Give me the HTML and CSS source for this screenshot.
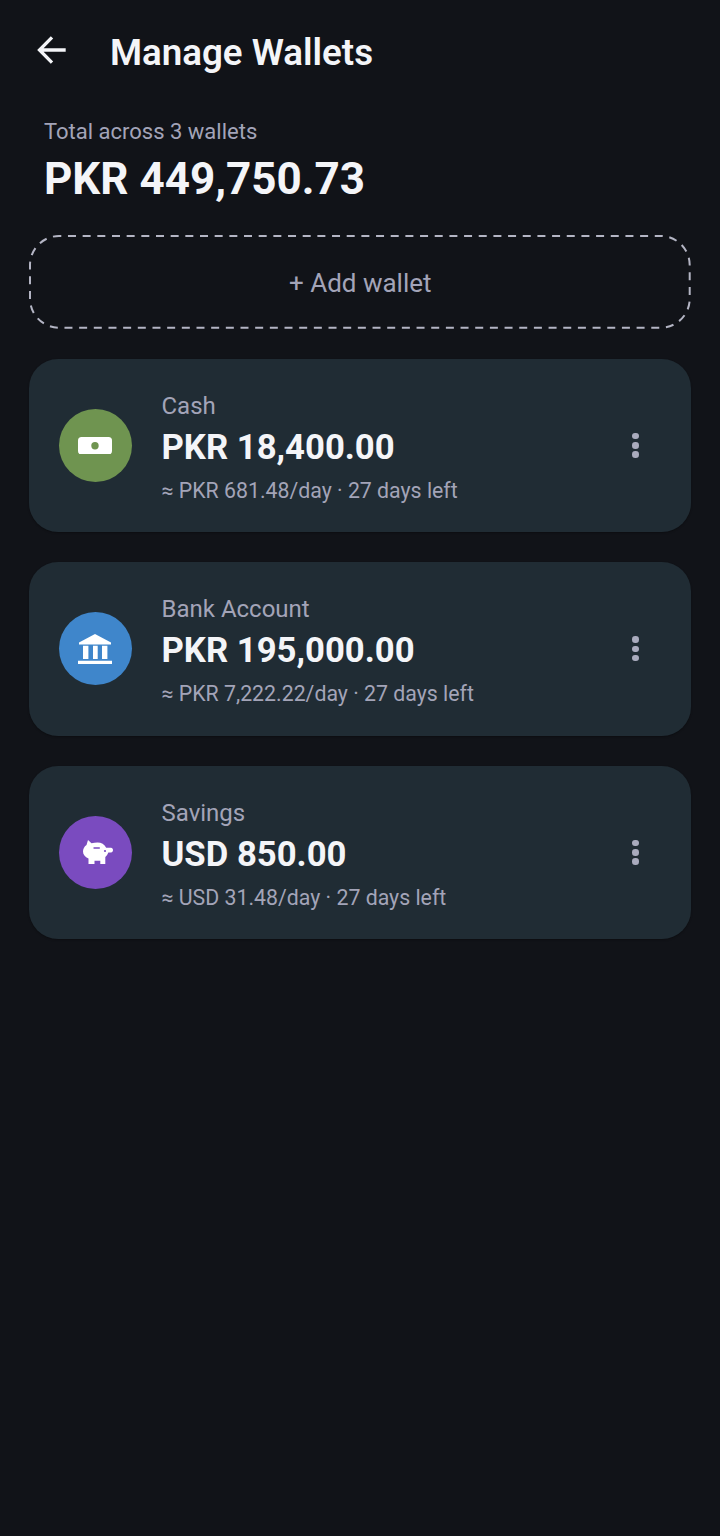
FILE: index.html
```html
<!DOCTYPE html>
<html lang="en">
<head>
<meta charset="utf-8">
<title>Manage Wallets</title>
<link rel="stylesheet" href="styles.css">
</head>
<body>
<main class="screen">
  <header class="topbar">
    <svg class="back" viewBox="0 0 32 30" aria-hidden="true"><path d="M29.700 15H3.500M16 2.300 3.500 15 16 27.700"/></svg>
    <h1 class="title">Manage Wallets</h1>
  </header>
  <section class="total">
    <div class="total-label">Total across 3 wallets</div>
    <div class="total-value">PKR 449,750.73</div>
  </section>
  <div class="add">
    <svg class="add-border" viewBox="0 0 661.500 94" aria-hidden="true"><rect x="1" y="1" width="659.700" height="91.700" rx="29" ry="29"/></svg>
    <span class="add-text">+ Add wallet</span>
  </div>
  <section class="list">
    <article class="card">
      <div class="avatar green">
        <svg class="icon" viewBox="0 0 34 17.500" aria-hidden="true"><rect x="0" y="0" width="34" height="17.500" rx="3.500" fill="#fff"/><circle cx="17" cy="8.750" r="3.700" fill="#6f9450"/></svg>
      </div>
      <div class="info">
        <div class="name">Cash</div>
        <div class="amount">PKR 18,400.00</div>
        <div class="rate">≈ PKR 681.48/day · 27 days left</div>
      </div>
      <div class="more"><i></i><i></i><i></i></div>
    </article>
    <article class="card">
      <div class="avatar blue">
        <svg class="icon bank" viewBox="0 0 34 30" aria-hidden="true"><path fill="#fff" d="M17 0 33 8.500V10.500H1V8.500ZM5 11.700h5.400V25H5ZM15 11.700h4.700V25H15ZM24 11.700h5.400V25H24ZM0 26.700h34V30H0Z"/></svg>
      </div>
      <div class="info">
        <div class="name">Bank Account</div>
        <div class="amount">PKR 195,000.00</div>
        <div class="rate">≈ PKR 7,222.22/day · 27 days left</div>
      </div>
      <div class="more"><i></i><i></i><i></i></div>
    </article>
    <article class="card">
      <div class="avatar purple">
        <svg class="icon pig" viewBox="0 0 30 24" aria-hidden="true"><path fill="#fff" d="M5 0l3.500 3.200C10.500 2.700 12.500 2.500 14.500 2.500c3.800 0 7 1.800 8.700 5.300H28c1.200 0 2 1 2 2.300s-.8 2.400-2 2.400h-2.700c-.6 1.800-1.600 3.300-3 4.500V24h-5v-3.200h-5.800V24H5.500v-5.500C2 17 0 14.500 0 11.500 0 9 1.200 6.500 3.500 5Z"/><rect x="10.300" y="7.200" width="6.700" height="1.500" rx=".7" fill="#7a4bbf"/><circle cx="22" cy="11" r="1.100" fill="#7a4bbf"/></svg>
      </div>
      <div class="info">
        <div class="name">Savings</div>
        <div class="amount">USD 850.00</div>
        <div class="rate">≈ USD 31.48/day · 27 days left</div>
      </div>
      <div class="more"><i></i><i></i><i></i></div>
    </article>
  </section>
</main>
</body>
</html>
```
FILE: styles.css
```css
* { box-sizing: border-box; }
html, body { margin: 0; height: 100%; background: #111318; }
body { font-family: Roboto, "Noto Sans", sans-serif; color: #f4f5f8; }
.screen { width: 720px; height: 1536px; padding: 0 29px; overflow: hidden; }
.topbar { display: flex; align-items: center; height: 100px; padding-left: 7px; }
.back { width: 32px; height: 30px; fill: none; stroke: #f4f5f8; stroke-width: 3.300; margin-right: 42px; flex: none; }
.title { margin: 0; font-size: 36.700px; font-weight: 600; line-height: 40px; margin-top: 6px; }
.total { padding: 19px 15px 0; height: 135px; }
.total-label { font-size: 22px; line-height: 26px; color: #a3a4b8; }
.total-value { font-size: 44px; font-weight: 700; line-height: 52px; margin-top: 8px; }
.add { position: relative; width: 661.500px; height: 94px; display: flex; align-items: center; justify-content: center; }
.add-border { position: absolute; inset: 0; width: 661.500px; height: 94px; }
.add-border rect { fill: none; stroke: #b4b5c4; stroke-width: 2; stroke-dasharray: 8 6.670; stroke-dashoffset: 5.700; }
.add-text { font-size: 26px; color: #a3a4b8; padding: 2px 0 0 1px; }
.list { display: flex; flex-direction: column; gap: 30px; margin-top: 29.700px; }
.card { display: flex; align-items: center; width: 661.500px; height: 173.500px; background: #202c34; border-radius: 29px; padding: 0 30px 0 29.500px; box-shadow: 0 1px 2px rgba(0,0,0,.3); }
.avatar { flex: none; width: 73px; height: 73px; border-radius: 50%; display: flex; align-items: center; justify-content: center; margin-right: 30px; }
.green { background: #6f9450; }
.blue { background: #3f86cb; }
.purple { background: #7a4bbf; }
.icon { width: 34px; height: 17.500px; }
.bank { height: 30px; }
.pig { width: 30px; height: 24px; margin-left: 6px; }
.info { flex: 1; align-self: flex-start; padding-top: 33.250px; }
.name { font-size: 24px; line-height: 28px; color: #a3a4b8; }
.amount { font-size: 34.700px; font-weight: 700; line-height: 40px; margin-top: 7px; }
.rate { font-size: 21.300px; line-height: 26px; color: #a3a4b8; margin-top: 11px; }
.more { display: flex; flex-direction: column; gap: 2.800px; margin-right: 21.900px; }
.more i { display: block; width: 6.500px; height: 6.500px; border-radius: 50%; background: #a9abbd; }
```
